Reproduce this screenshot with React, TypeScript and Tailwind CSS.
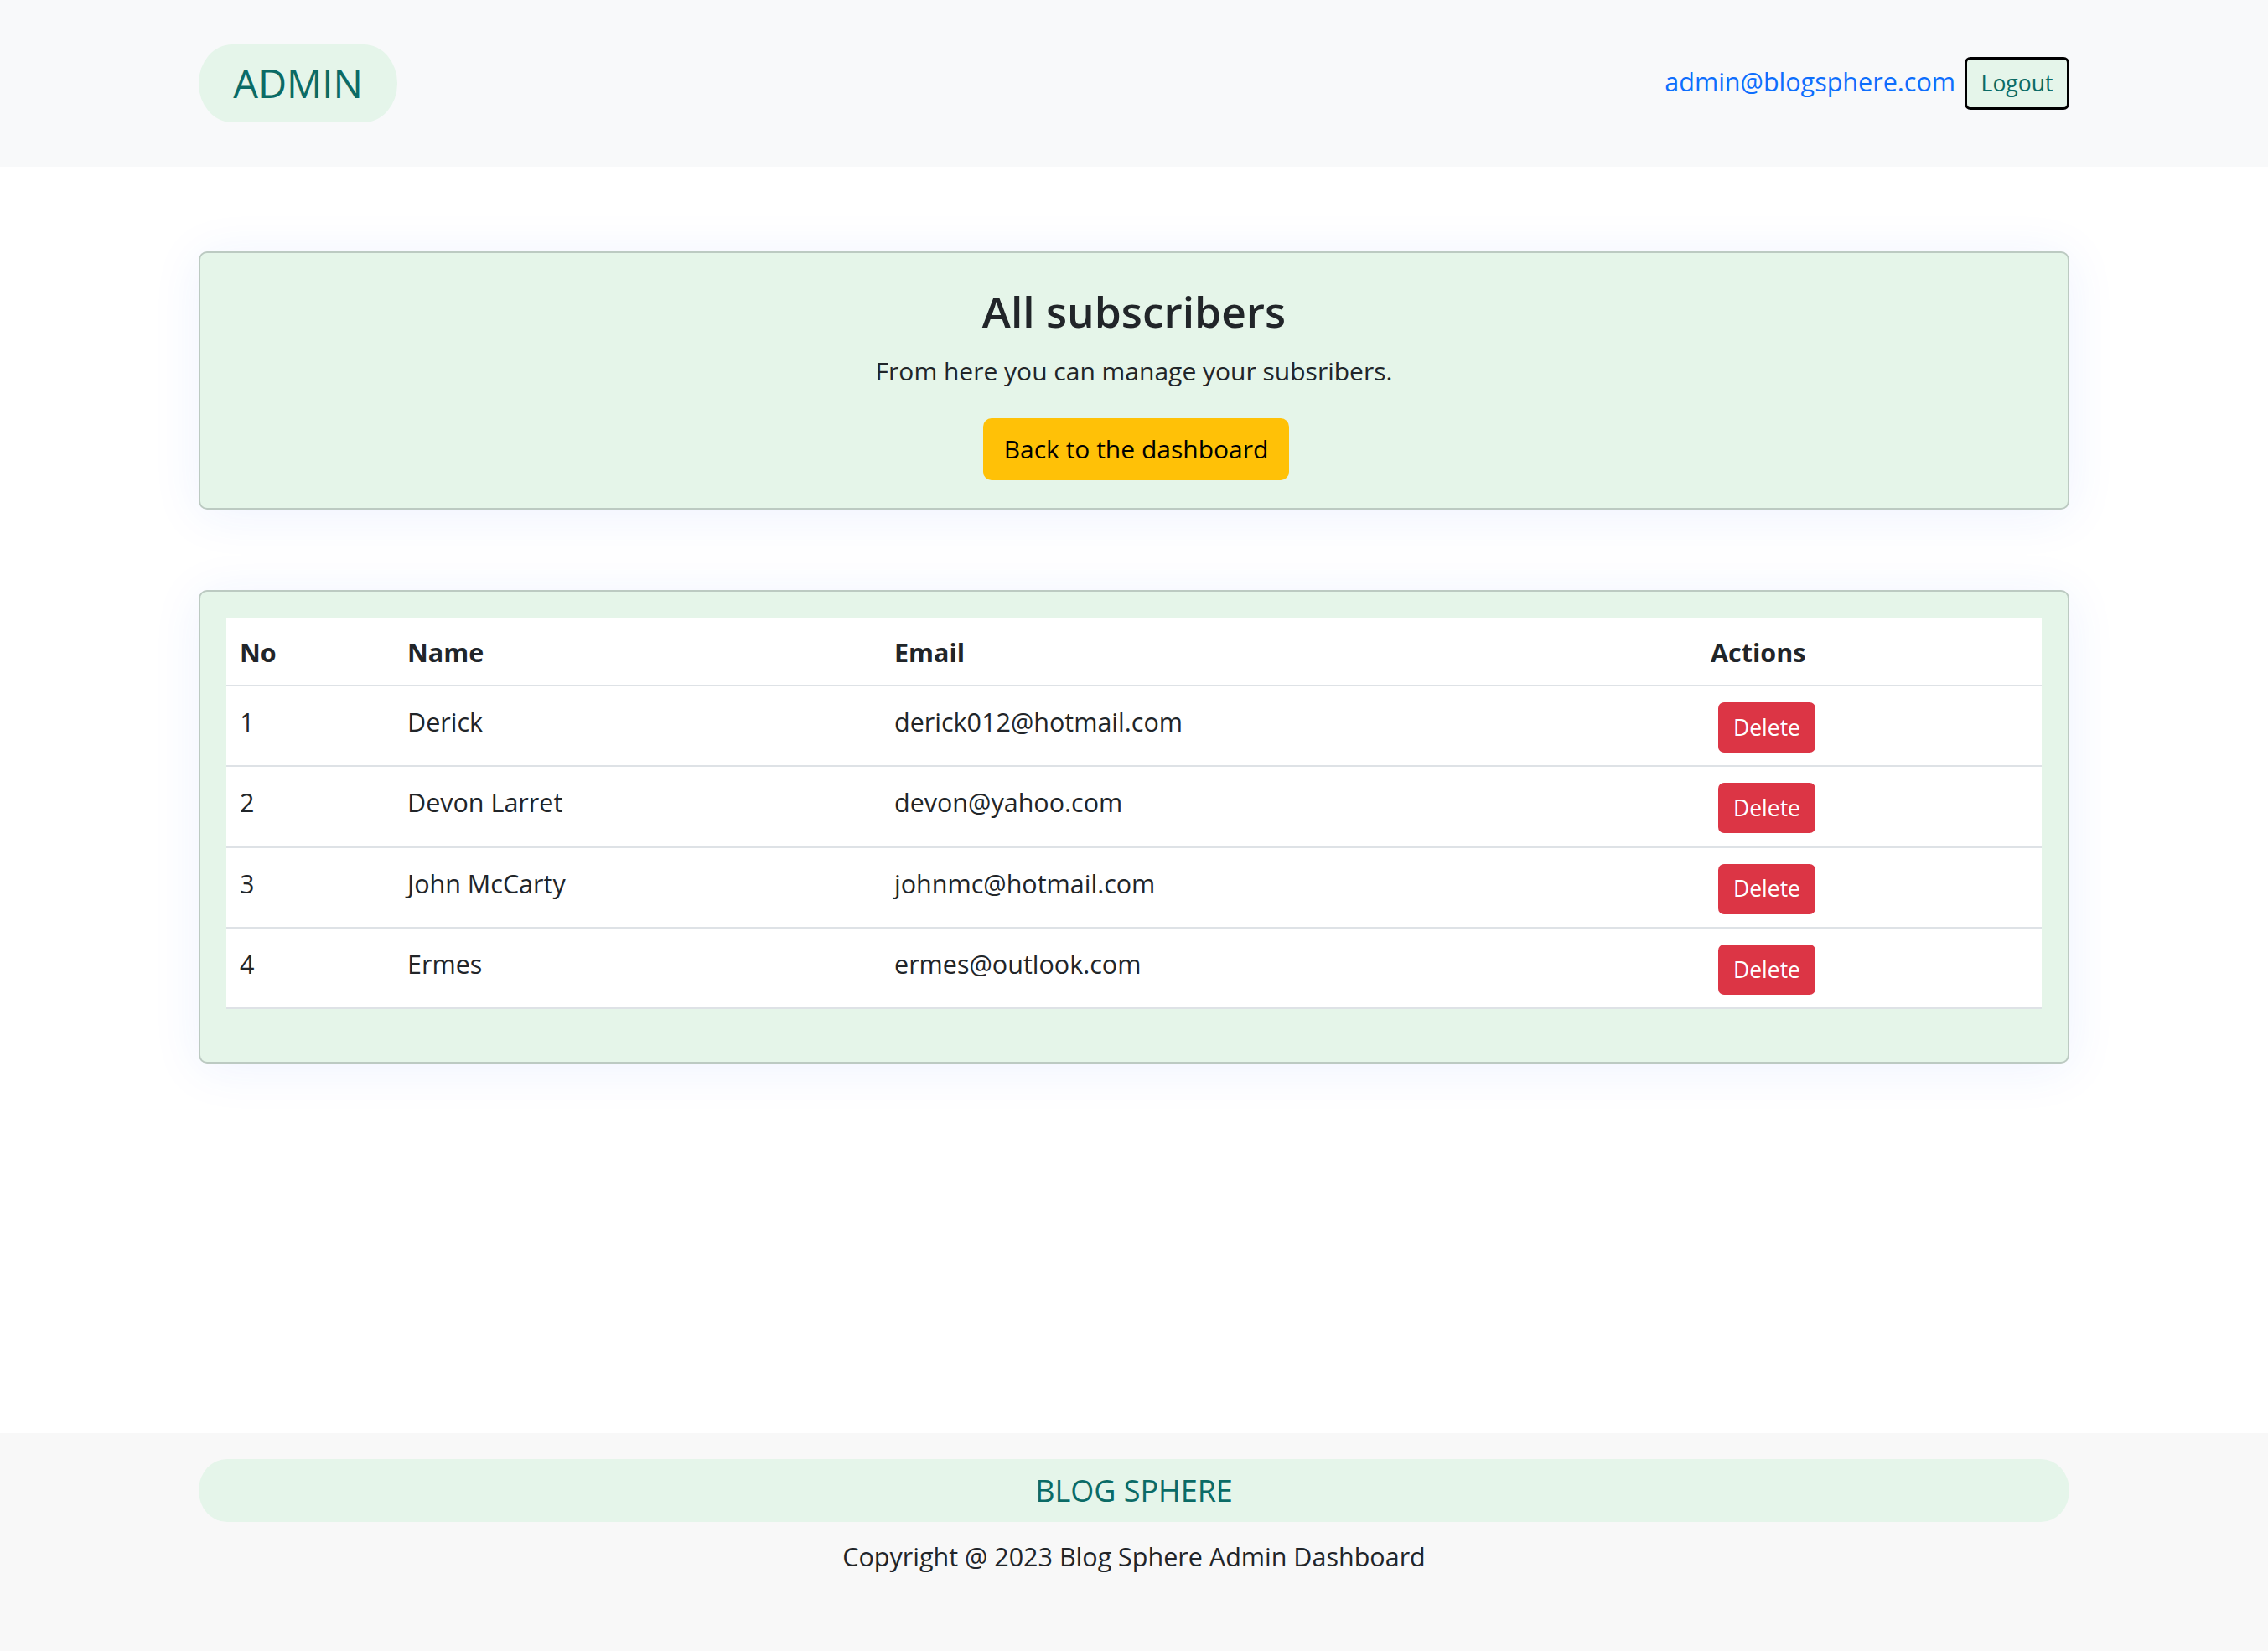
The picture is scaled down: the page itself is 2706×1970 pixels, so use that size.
import React from "react";

const rows = [
  { no: 1, name: "Derick", email: "derick012@hotmail.com" },
  { no: 2, name: "Devon Larret", email: "devon@yahoo.com" },
  { no: 3, name: "John McCarty", email: "johnmc@hotmail.com" },
  { no: 4, name: "Ermes", email: "ermes@outlook.com" },
];

export default function App() {
  return (
    <div className="min-h-screen flex flex-col bg-white text-[#212529] font-['Open_Sans','Noto_Sans',sans-serif]">
      <header className="bg-[#f8f9fa] h-[199px] shrink-0">
        <div className="mx-auto w-[2232px] h-full flex items-center justify-between">
          <div className="h-[93px] w-[237px] rounded-[40px/46px] bg-[#e5f5ea] flex items-center justify-center text-[47px] text-[#0b6b66] leading-none">
            ADMIN
          </div>
          <div className="flex items-center gap-[11px]">
            <a className="text-[30.5px] text-[#0d6efd] leading-none -mt-[5px]">admin@blogsphere.com</a>
            <button className="h-[63px] w-[125px] rounded-[7px] border-[3px] border-black bg-[#e5f5ea] text-[#0b6b66] text-[26.5px] leading-none flex items-center justify-center">
              Logout
            </button>
          </div>
        </div>
      </header>

      <main className="flex-1 pt-[101px]">
        <div className="mx-auto w-[2232px]">
          <section className="rounded-[10px] border-2 border-[#bccac2] bg-[#e5f5e9] pt-[38px] pb-[33px] flex flex-col items-center shadow-[0_6px_60px_rgba(40,90,255,0.08)]">
            <h2 className="text-[51.5px] font-semibold leading-[62px] text-[#212529]">All subscribers</h2>
            <p className="mt-[19px] text-[30px] leading-[44px]">From here you can manage your subsribers.</p>
            <button className="mt-[34px] ml-[5px] h-[74px] px-[25px] rounded-[10px] bg-[#ffc107] text-[30px] text-black leading-none">
              Back to the dashboard
            </button>
          </section>

          <section className="mt-[96px] rounded-[10px] border-2 border-[#bccac2] bg-[#e5f5e9] pt-[31px] px-[31px] pb-[63px] shadow-[0_6px_60px_rgba(40,90,255,0.08)]">
            <div className="bg-white">
              <div className="grid grid-cols-[200px_581px_974px_409px] h-[82px] items-center border-b-2 border-[#dee2e6] text-[30.5px] font-bold">
                <div className="pl-[16px] pt-[3px]">No</div>
                <div className="pl-[16px] pt-[3px]">Name</div>
                <div className="pl-[16px] pt-[3px]">Email</div>
                <div className="pl-[16px] pt-[3px]">Actions</div>
              </div>
              {rows.map((r) => (
                <div
                  key={r.no}
                  className="grid grid-cols-[200px_581px_974px_409px] h-[96.3px] items-start border-b-2 border-[#dee2e6] text-[30.5px]"
                >
                  <div className="pl-[16px] pt-[20px] leading-[44px]">{r.no}</div>
                  <div className="pl-[16px] pt-[20px] leading-[44px]">{r.name}</div>
                  <div className="pl-[16px] pt-[20px] leading-[44px]">{r.email}</div>
                  <div className="pl-[25px] pt-[19px]">
                    <button className="h-[60px] w-[116px] rounded-[7px] bg-[#dc3545] text-white text-[26.5px] leading-none flex items-center justify-center">
                      Delete
                    </button>
                  </div>
                </div>
              ))}
            </div>
          </section>
        </div>
      </main>

      <footer className="bg-[#f8f8f8] h-[260px] shrink-0 pt-[31px]">
        <div className="mx-auto w-[2232px] flex flex-col items-center">
          <div className="w-full h-[75px] rounded-[34px/37px] bg-[#e5f5ea] flex items-center justify-center text-[36px] text-[#0b6b66] leading-none">
            BLOG SPHERE
          </div>
          <p className="mt-[19px] text-[30.5px] leading-[44px]">Copyright @ 2023 Blog Sphere Admin Dashboard</p>
        </div>
      </footer>
    </div>
  );
}
